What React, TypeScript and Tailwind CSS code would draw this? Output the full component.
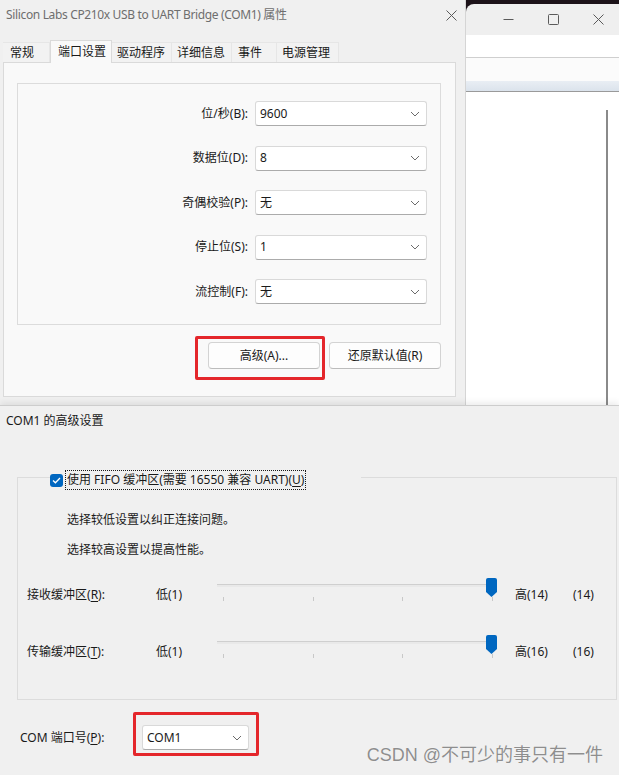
import React from 'react';

const portRows = [
  { label: '位/秒(B):', value: '9600' },
  { label: '数据位(D):', value: '8' },
  { label: '奇偶校验(P):', value: '无' },
  { label: '停止位(S):', value: '1' },
  { label: '流控制(F):', value: '无' },
];

const tabs = [
  { name: '常规', w: 'w-[47px] pl-[7px]' },
  { name: '端口设置', w: 'w-[62px] pl-[7px]', active: true },
  { name: '驱动程序', w: 'w-[60px] pl-[5px]' },
  { name: '详细信息', w: 'w-[60px] pl-[5px]' },
  { name: '事件', w: 'w-[45px] pl-[6px]' },
  { name: '电源管理', w: 'w-[62px] pl-[5px]' },
];

function Chevron() {
  return (
    <svg width="10" height="6" viewBox="0 0 10 6" className="shrink-0">
      <path d="M1 1L5 5L9 1" fill="none" stroke="#6b6b6b" strokeWidth="1" />
    </svg>
  );
}

function Combo({ value, className = '' }: { value: string; className?: string }) {
  return (
    <div
      className={`flex h-[25px] items-center justify-between rounded-[3px] border border-[#d9d9d9] border-b-[#ababab] bg-white pl-[4px] pr-[6px] ${className}`}
    >
      <span>{value}</span>
      <Chevron />
    </div>
  );
}

function Button({ children }: { children: React.ReactNode }) {
  return (
    <div className="flex h-[27px] w-[112px] items-center justify-center rounded-[4px] border border-[#d3d3d3] border-b-[#bcbcbc] bg-[#fdfdfd]">
      {children}
    </div>
  );
}

// track, ticks and the blue thumb parked at the right end
function Slider() {
  return (
    <svg width="282" height="28" viewBox="0 0 282 28" className="shrink-0">
      <rect x="0" y="8" width="280" height="1" fill="#cfcfcf" />
      <rect x="0" y="9" width="280" height="2" fill="#e9e9e9" />
      {[6, 96, 185, 275].map((x) => (
        <line key={x} x1={x + 0.5} y1="21" x2={x + 0.5} y2="25" stroke="#c8c8c8" strokeWidth="1" />
      ))}
      <path d="M269 4Q269 2 271 2H278Q280 2 280 4V16L274.5 21L269 16Z" fill="#0067c0" />
    </svg>
  );
}

function SliderRow({ label, hotkey, high }: { label: string; hotkey: string; high: string }) {
  return (
    <div className="flex h-[28px] items-start pl-[9px]">
      <span className="mt-[11px] w-[129px] leading-4">
        {label}(<span className="underline underline-offset-2">{hotkey}</span>):
      </span>
      <span className="mt-[11px] w-[61px] leading-4">低(1)</span>
      <Slider />
      <span className="ml-[16px] mt-[11px] w-[58px] leading-4">高({high})</span>
      <span className="mt-[11px] leading-4">({high})</span>
    </div>
  );
}

function WinIcon({ kind }: { kind: 'min' | 'max' | 'close' }) {
  return (
    <svg width="11" height="11" viewBox="0 0 11 11" className="shrink-0">
      {kind === 'min' && <line x1="0.5" y1="5.5" x2="10.5" y2="5.5" stroke="#5a5a5a" strokeWidth="1" />}
      {kind === 'max' && <rect x="0.5" y="0.5" width="10" height="10" rx="1" fill="none" stroke="#5a5a5a" strokeWidth="1" />}
      {kind === 'close' && <path d="M0.5 0.5L10.5 10.5M10.5 0.5L0.5 10.5" stroke="#5a5a5a" strokeWidth="1" />}
    </svg>
  );
}

export default function App() {
  return (
    <div className="relative h-[775px] w-[619px] overflow-hidden bg-[#f0f0f0] font-['Noto_Sans','Noto_Sans_CJK_SC',sans-serif] text-[12px] leading-4 text-[#1a1a1a]">
      {/* Top: properties dialog + window behind it */}
      <div className="flex h-[405px] overflow-hidden">
        <div className="flex w-[466px] shrink-0 flex-col border-r border-[#d5d5d5] bg-[#f0f0f0]">
          <div className="flex h-[30px] items-center justify-between pl-[6px] pr-[8px]">
            <span className="tracking-[-0.35px] text-[#6e6e6e]">Silicon Labs CP210x USB to UART Bridge (COM1) 属性</span>
            <WinIcon kind="close" />
          </div>

          <div className="mt-[10px] flex h-[22px] items-end px-[3px]">
            {tabs.map((t) =>
              t.active ? (
                <div
                  key={t.name}
                  className={`relative z-10 -mb-px flex h-[23px] items-center border border-b-0 border-[#dadada] bg-[#f9f9f9] ${t.w}`}
                >
                  {t.name}
                </div>
              ) : (
                <div
                  key={t.name}
                  className={`flex h-[20px] items-center border-r border-t border-[#e6e6e6] bg-[#f2f2f2] ${t.w}`}
                >
                  {t.name}
                </div>
              ),
            )}
          </div>

          <div className="ml-[3px] h-[335px] w-[453px] border border-[#dadada] bg-[#f9f9f9]">
            <div className="ml-[13px] mt-[20px] flex h-[242px] w-[424px] flex-col gap-[19.5px] border border-[#dcdcdc] pr-[13px] pt-[17px]">
              {portRows.map((r) => (
                <div key={r.label} className="flex items-center justify-end gap-[7px]">
                  <span>{r.label}</span>
                  <Combo value={r.value} className="w-[172px]" />
                </div>
              ))}
            </div>

            <div className="mt-[17px] flex justify-end gap-[9px] pr-[14px]">
              <div className="relative">
                <Button>高级(A)...</Button>
                <div className="absolute -bottom-[11px] -left-[13px] -right-[5px] -top-[6px] rounded-[2px] border-[3px] border-[#e4262b]" />
              </div>
              <Button>还原默认值(R)</Button>
            </div>
          </div>
        </div>

        {/* window behind */}
        <div className="flex flex-1 flex-col bg-[#1c1219]">
          <div className="mt-[4px] flex flex-1 flex-col overflow-hidden rounded-tl-[8px] bg-[#efefef]">
            <div className="flex h-[31px] items-center gap-[34px] pl-[37px]">
              <WinIcon kind="min" />
              <WinIcon kind="max" />
              <WinIcon kind="close" />
            </div>
            <div className="h-[23px] border-b border-[#cfcfcf] bg-white" />
            <div className="h-[23px] bg-[#fbfbfb]" />
            <div className="h-[11px] border-b border-[#9a9a9a] bg-gradient-to-b from-[#e9eef4] to-[#dbe3ec]" />
            <div className="flex flex-1 justify-end bg-white pr-[11px] pt-[18px]">
              <div className="w-[2px] bg-[#8a8a8a]" />
            </div>
          </div>
        </div>
      </div>

      {/* Bottom: COM1 advanced settings */}
      <div className="relative z-10 h-[370px] border-t border-[#cdcdcd] bg-[#f0f0f0] shadow-[0_-3px_6px_rgba(0,0,0,0.07)]">
        <div className="flex h-[29px] items-center pl-[6px]">COM1 的高级设置</div>

        <div className="ml-[17px] mt-[42px] w-[600px] border border-[#dcdcdc] pb-[38px]">
          <div className="-mt-[8px] ml-[32px] flex h-[20px] w-[311px] items-center bg-[#f0f0f0]">
            <div className="flex h-[13px] w-[13px] items-center justify-center rounded-[3px] bg-[#0067c0]">
              <svg width="9" height="7" viewBox="0 0 9 7">
                <path d="M1 3.5L3.4 5.8L8 1" fill="none" stroke="white" strokeWidth="1.3" />
              </svg>
            </div>
            <div className="ml-[2px] flex h-[20px] items-center border border-dotted border-[#1a1a1a] px-[1px]">
              使用 FIFO 缓冲区(需要 16550 兼容 UART)(<span className="underline underline-offset-2">U</span>)
            </div>
          </div>

          <p className="mt-[22px] pl-[49px]">选择较低设置以纠正连接问题。</p>
          <p className="mt-[14px] pl-[49px]">选择较高设置以提高性能。</p>

          <div className="mt-[18px]">
            <SliderRow label="接收缓冲区" hotkey="R" high="14" />
          </div>
          <div className="mt-[29px]">
            <SliderRow label="传输缓冲区" hotkey="T" high="16" />
          </div>
        </div>

        <div className="mt-[25px] flex items-center pl-[20px]">
          <span className="w-[122px]">
            COM 端口号(<span className="underline underline-offset-2">P</span>):
          </span>
          <div className="relative">
            <Combo value="COM1" className="h-[24px] w-[107px]" />
            <div className="absolute -bottom-[6px] -left-[9px] -right-[10px] -top-[13px] rounded-[2px] border-[3px] border-[#e4262b]" />
          </div>
        </div>

        <div className="absolute bottom-[8px] right-[16px] font-['Liberation_Sans','Noto_Sans_CJK_SC',sans-serif] text-[18px] leading-6 text-[#8e8e8e] [text-shadow:0_0_1px_#ffffff]">
          CSDN @不可少的事只有一件
        </div>
      </div>
    </div>
  );
}
